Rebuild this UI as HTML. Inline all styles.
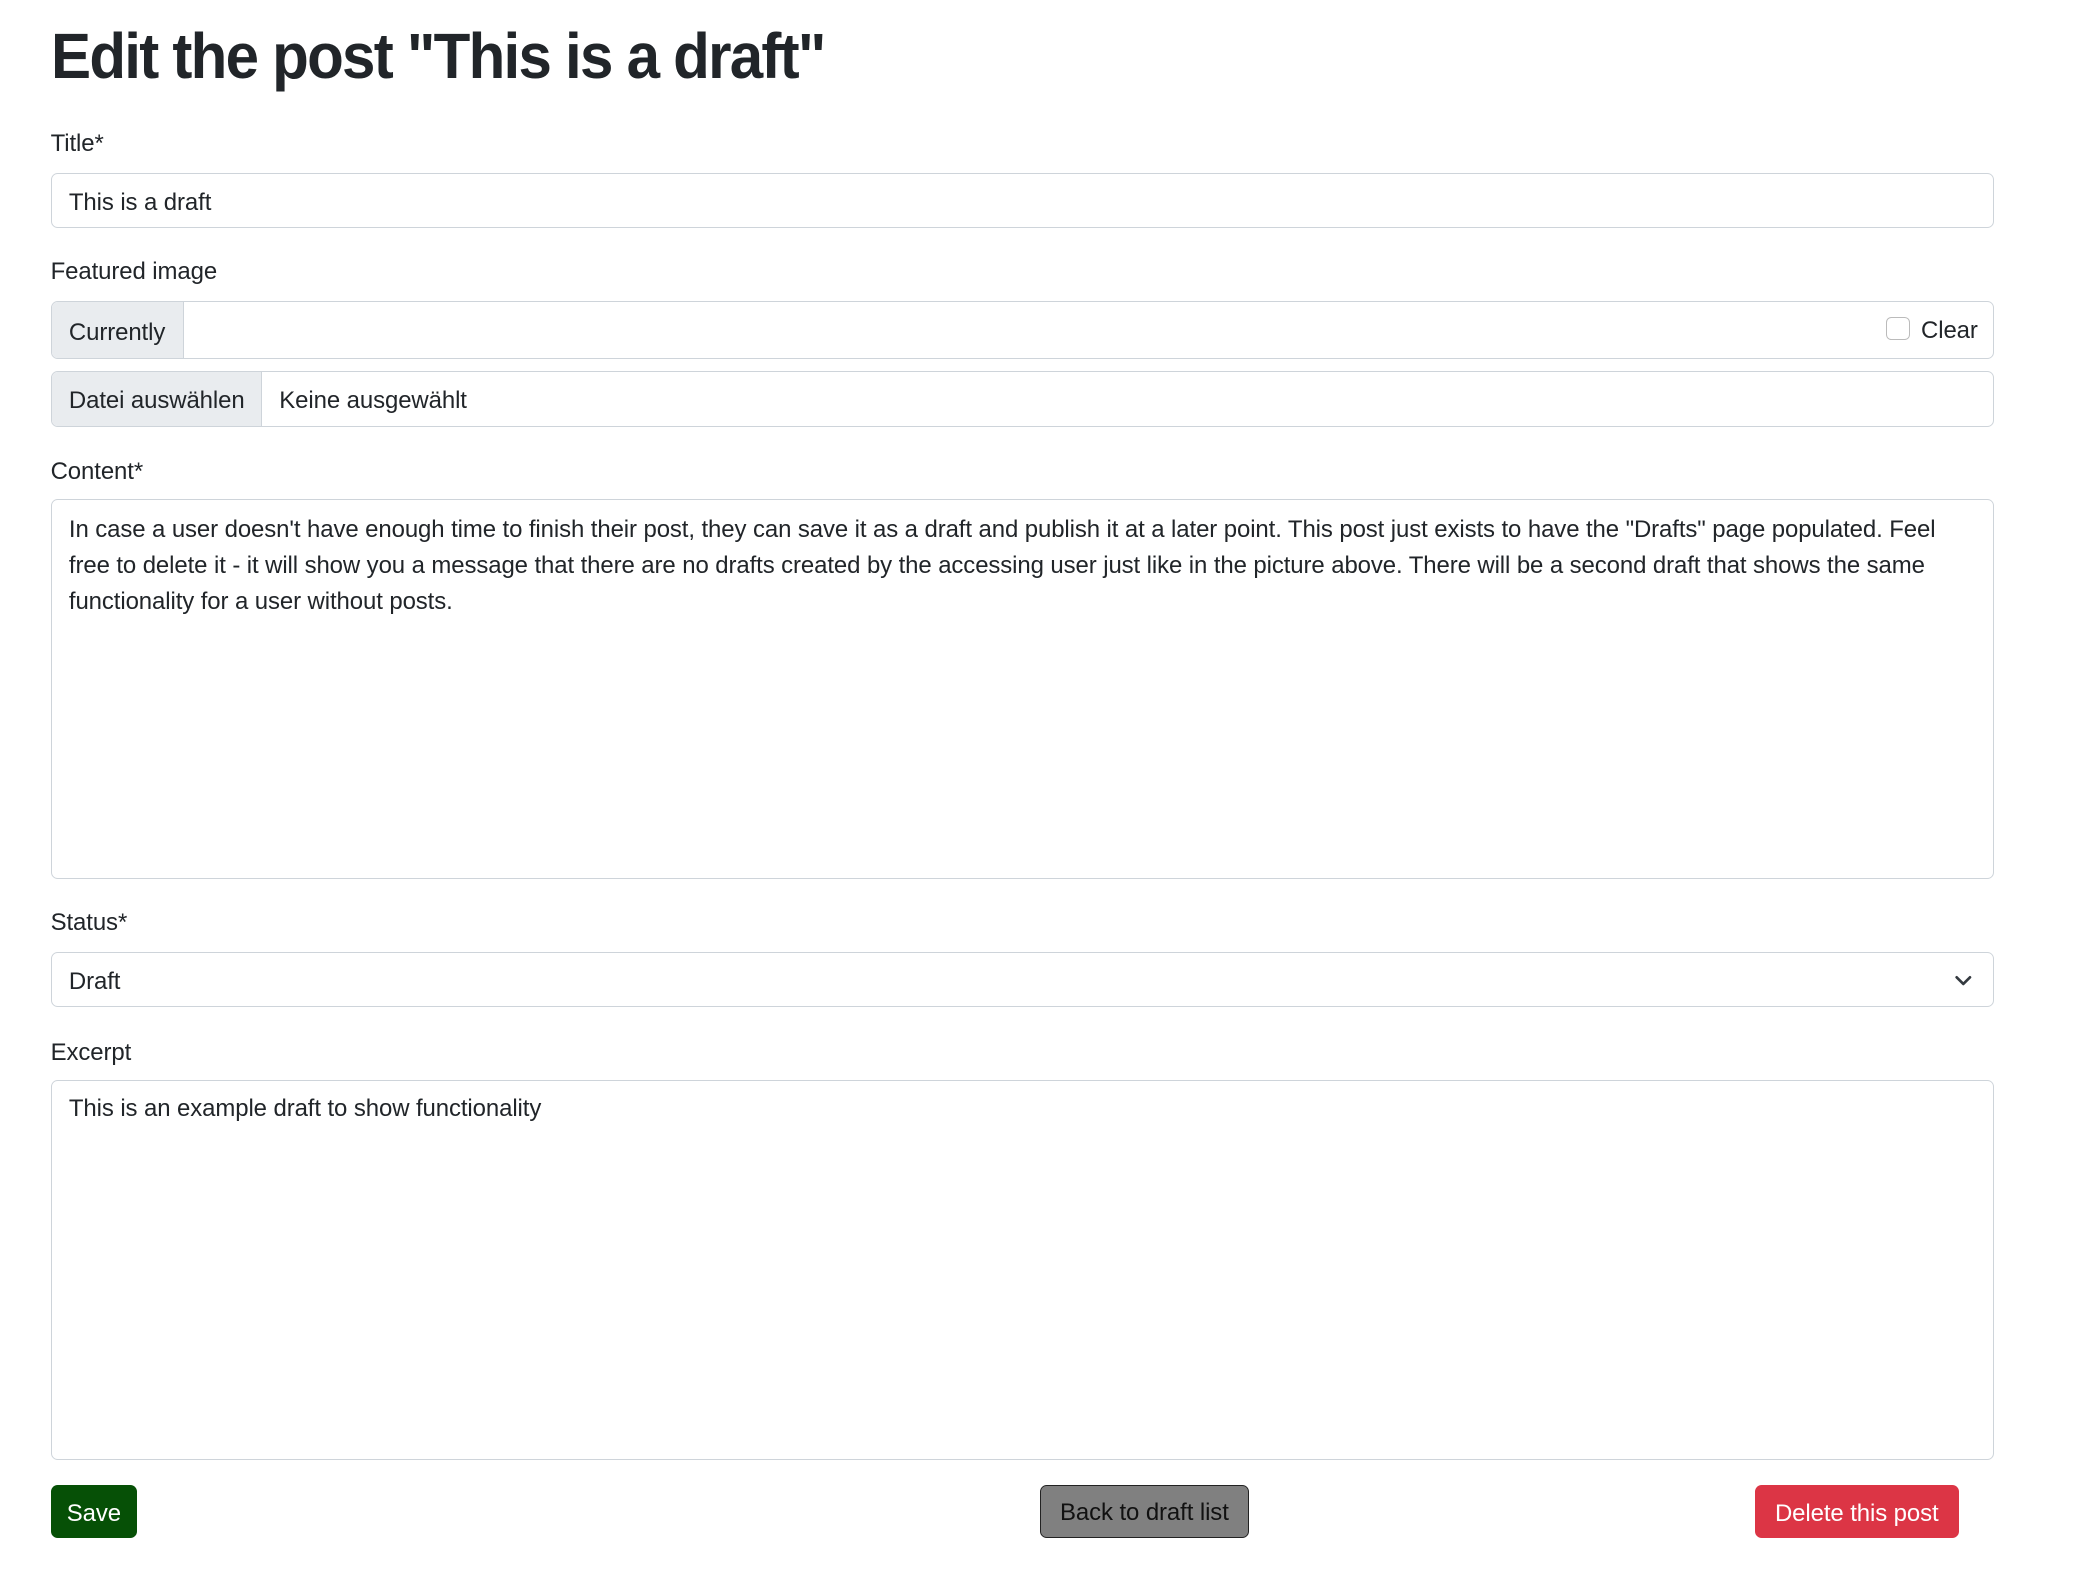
<!DOCTYPE html>
<html><head><meta charset="utf-8"><style>
html,body{margin:0;padding:0;background:#fff;width:2087px;height:1585px;overflow:hidden}
#w{zoom:1.3315;position:relative;width:1567px;height:1190px;font-family:"Liberation Sans",sans-serif;color:#212529}
.a{position:absolute;white-space:nowrap}
.t{font-size:18px;letter-spacing:-0.07px}
.box{position:absolute;left:38px;width:1458px;border:1px solid #ced4da;border-radius:5px;background:#fff}
.btn{position:absolute;top:1115px;height:40px;border-radius:5px;font-size:18px;letter-spacing:-0.07px;line-height:43px;text-align:center;box-sizing:border-box}
</style></head><body><div id="w">
<div class="a" style="left:38px;top:14px;font-size:48px;font-weight:bold;letter-spacing:-1.4px;color:#212529;transform:scaleX(0.94);transform-origin:left">Edit the post "This is a draft"</div>

<div class="a t" style="left:38px;top:98px">Title*</div>
<div class="box" style="top:130px;height:40px"><div class="a t" style="left:13px;top:11px">This is a draft</div></div>

<div class="a t" style="left:38px;top:194px">Featured image</div>
<div class="box" style="top:226px;height:42px;overflow:hidden">
 <div style="position:absolute;left:0;top:0;width:99px;height:42px;background:#e9ecef;border-right:1px solid #ced4da"></div>
 <div class="a t" style="left:13px;top:13px">Currently</div>
 <div style="position:absolute;left:1378px;top:11px;width:16px;height:16px;border:1px solid #bbb;border-radius:4px"></div>
 <div class="a t" style="left:1404px;top:11px">Clear</div>
</div>
<div class="box" style="top:279px;height:40px;overflow:hidden">
 <div style="position:absolute;left:0;top:0;width:157px;height:40px;background:#e9ecef;border-right:1px solid #ced4da"></div>
 <div class="a t" style="left:13px;top:11px">Datei auswählen</div>
 <div class="a t" style="left:171px;top:11px">Keine ausgewählt</div>
</div>

<div class="a t" style="left:38px;top:344px">Content*</div>
<div class="box" style="top:375px;height:284px">
 <div class="a t" style="left:13px;top:9px;line-height:27px">In case a user doesn't have enough time to finish their post, they can save it as a draft and publish it at a later point. This post just exists to have the "Drafts" page populated. Feel<br>free to delete it - it will show you a message that there are no drafts created by the accessing user just like in the picture above. There will be a second draft that shows the same<br>functionality for a user without posts.</div>
</div>

<div class="a t" style="left:38px;top:683px">Status*</div>
<div class="box" style="top:715px;height:40px">
 <div class="a t" style="left:13px;top:11px">Draft</div>
 <svg style="position:absolute;left:1429px;top:14px" width="14" height="12" viewBox="0 0 14 12"><path d="M2 4l5 5 5-5" fill="none" stroke="#343a40" stroke-width="2" stroke-linecap="round" stroke-linejoin="round"/></svg>
</div>

<div class="a t" style="left:38px;top:780px">Excerpt</div>
<div class="box" style="top:811px;height:284px">
 <div class="a t" style="left:13px;top:11px">This is an example draft to show functionality</div>
</div>

<div class="btn" style="left:38px;width:65px;background:#065006;color:#fff">Save</div>
<div class="btn" style="left:781px;width:157px;background:#808080;border:1px solid #222;color:#111;line-height:41px">Back to draft list</div>
<div class="btn" style="left:1318px;width:153px;background:#dc3545;color:#fff">Delete this post</div>
</div></body></html>
